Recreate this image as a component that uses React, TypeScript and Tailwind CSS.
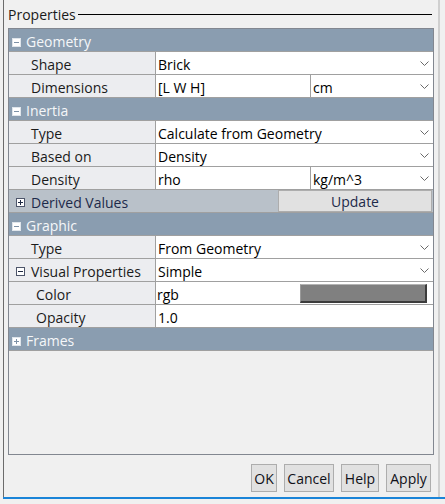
import React from 'react';

const Chevron = () => (
  <svg width="9" height="5" viewBox="0 0 9 5" className="shrink-0">
    <path d="M0.5 0.5L4.5 4.5L8.5 0.5" fill="none" stroke="#6a6a6a" strokeWidth="1" />
  </svg>
);

// small expand / collapse box
const Toggle = ({ open, dark, className }: { open: boolean; dark?: boolean; className?: string }) => (
  <svg width="9" height="9" viewBox="0 0 9 9" className={`shrink-0 ${className ?? ''}`}>
    <rect x="0.5" y="0.5" width="8" height="8" fill="#ffffff" stroke={dark ? '#4d556a' : '#dfe5eb'} />
    <path d="M2 4.5H7" stroke={dark ? '#1f2a44' : '#7d91a6'} strokeWidth="1" />
    {!open && <path d="M4.5 2V7" stroke={dark ? '#1f2a44' : '#7d91a6'} strokeWidth="1" />}
  </svg>
);

const Header = ({ title, open }: { title: string; open: boolean }) => (
  <div className="flex h-[23px] shrink-0 items-start border-b border-[#a0a0a0] bg-[#8a9db0] text-[#f5f7f9]">
    <Toggle open={open} className="ml-[3px] mt-[9px]" />
    <span className="ml-[5px] pt-[3px] leading-[19px]">{title}</span>
  </div>
);

const Label = ({ children, pl = 'pl-[22px]' }: { children: React.ReactNode; pl?: string }) => (
  <div className={`w-[147px] shrink-0 border-r border-[#a0a0a0] bg-[#ecedf0] pt-[3px] leading-[19px] text-[#1b1b1b] ${pl}`}>
    {children}
  </div>
);

const Row = ({
  label,
  value,
  unit,
  drop,
  pl,
}: {
  label: string;
  value: string;
  unit?: string;
  drop?: boolean;
  pl?: string;
}) => (
  <div className="flex h-[23px] shrink-0 border-b border-[#a0a0a0]">
    <Label pl={pl}>{label}</Label>
    {unit ? (
      <>
        <div className="w-[155px] shrink-0 border-r border-[#a0a0a0] bg-white pl-[2px] pt-[3px] leading-[19px] text-black">
          {value}
        </div>
        <div className="flex flex-1 items-center bg-white pl-[2px] text-black">
          <span className="pt-[3px] leading-[19px] self-start">{unit}</span>
          <span className="ml-auto mr-[4px]">
            <Chevron />
          </span>
        </div>
      </>
    ) : (
      <div className="flex flex-1 items-center bg-white pl-[2px] text-black">
        <span className="pt-[3px] leading-[19px] self-start">{value}</span>
        {drop && (
          <span className="ml-auto mr-[4px]">
            <Chevron />
          </span>
        )}
      </div>
    )}
  </div>
);

const buttons = [
  { text: 'OK', w: 'w-[26px]' },
  { text: 'Cancel', w: 'w-[50px]' },
  { text: 'Help', w: 'w-[38px]' },
  { text: 'Apply', w: 'w-[45px]' },
];

export default function App() {
  return (
    <div className="flex h-[504px] w-[445px] flex-col overflow-hidden bg-[#f0f0f0] font-['Open_Sans',sans-serif] text-[14px]">
      <div className="flex h-[497px] shrink-0">
        <div className="w-[3px] shrink-0" />
        <div className="w-[1px] shrink-0 bg-[#6b6b6b]" />
        <div className="flex flex-1 flex-col pl-[4px] pr-[4px]">
          {/* title with separator */}
          <div className="flex h-[28px] shrink-0 items-start pt-[5px]">
            <span className="leading-[19px] text-[#1a1a1a]">Properties</span>
            <div className="ml-[2px] mr-[2px] mt-[9px] h-[1px] flex-1 bg-black" />
          </div>

          {/* property grid */}
          <div className="flex h-[427px] w-[426px] shrink-0 flex-col border border-[#828790]">
            <Header title="Geometry" open />
            <Row label="Shape" value="Brick" drop />
            <Row label="Dimensions" value="[L W H]" unit="cm" />
            <Header title="Inertia" open />
            <Row label="Type" value="Calculate from Geometry" drop />
            <Row label="Based on" value="Density" drop />
            <Row label="Density" value="rho" unit="kg/m^3" />
            <div className="flex h-[23px] shrink-0 border-b border-[#a0a0a0] bg-[#b9c1c9]">
              <div className="flex w-[269px] shrink-0 items-start pl-[7px]">
                <Toggle open={false} dark className="mt-[8px]" />
                <span className="ml-[6px] pt-[3px] leading-[19px] text-[#1d2a4a]">Derived Values</span>
              </div>
              <button className="h-[22px] w-[154px] shrink-0 border border-[#adadad] bg-[#e1e1e1] pt-[1px] leading-[19px] text-[#1d2a4a]">
                Update
              </button>
            </div>
            <Header title="Graphic" open />
            <Row label="Type" value="From Geometry" drop />
            <div className="flex h-[23px] shrink-0 border-b border-[#a0a0a0]">
              <div className="flex w-[147px] shrink-0 items-start border-r border-[#a0a0a0] bg-[#ecedf0] pl-[7px]">
                <Toggle open dark className="mt-[8px]" />
                <span className="ml-[6px] pt-[3px] leading-[19px] text-[#1b1b1b]">Visual Properties</span>
              </div>
              <div className="flex flex-1 items-center bg-white pl-[2px] text-black">
                <span className="self-start pt-[3px] leading-[19px]">Simple</span>
                <span className="ml-auto mr-[4px]">
                  <Chevron />
                </span>
              </div>
            </div>
            <div className="flex h-[23px] shrink-0 border-b border-[#a0a0a0]">
              <Label pl="pl-[27px]">Color</Label>
              <div className="flex flex-1 items-start bg-white pl-[1px] text-black">
                <span className="pt-[3px] leading-[19px]">rgb</span>
                <div className="ml-auto mr-[6px] mt-[2px] h-[19px] w-[127px] border-b-2 border-l border-r-2 border-t border-b-[#3c3c3c] border-l-[#9a9a9a] border-r-[#3c3c3c] border-t-[#b4b4b4] bg-[#808080]" />
              </div>
            </div>
            <Row label="Opacity" value="1.0" pl="pl-[27px]" />
            <Header title="Frames" open={false} />
            <div className="flex-1 bg-[#f0f0f0]" />
          </div>

          {/* dialog buttons */}
          <div className="mt-[9px] flex shrink-0 justify-end gap-[7px] pr-[3px]">
            {buttons.map((b) => (
              <button
                key={b.text}
                className={`h-[28px] ${b.w} border border-[#adadad] bg-[#e1e1e1] leading-[19px] text-[#101018]`}
              >
                {b.text}
              </button>
            ))}
          </div>
        </div>
        <div className="w-[2px] shrink-0 bg-[#cfcfcf]" />
        <div className="w-[5px] shrink-0" />
      </div>
      <div className="ml-[3px] h-[2px] shrink-0 bg-[#1a84d8]" />
    </div>
  );
}
